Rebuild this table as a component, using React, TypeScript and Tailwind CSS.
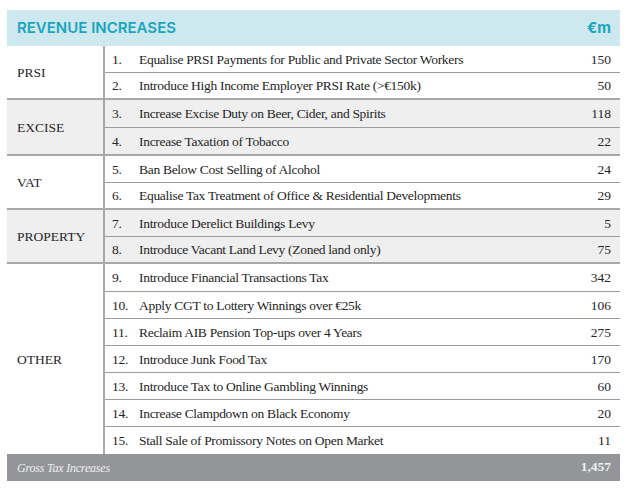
import React from "react";

type Item = { n: string; t: string; v: string; h: number };
type Group = { cat: string; gray: boolean; items: Item[] };

const groups: Group[] = [
  {
    cat: "PRSI",
    gray: false,
    items: [
      { n: "1.", t: "Equalise PRSI Payments for Public and Private Sector Workers", v: "150", h: 27 },
      { n: "2.", t: "Introduce High Income Employer PRSI Rate (>€150k)", v: "50", h: 27 },
    ],
  },
  {
    cat: "EXCISE",
    gray: true,
    items: [
      { n: "3.", t: "Increase Excise Duty on Beer, Cider, and Spirits", v: "118", h: 28 },
      { n: "4.", t: "Increase Taxation of Tobacco", v: "22", h: 28 },
    ],
  },
  {
    cat: "VAT",
    gray: false,
    items: [
      { n: "5.", t: "Ban Below Cost Selling of Alcohol", v: "24", h: 27 },
      { n: "6.", t: "Equalise Tax Treatment of Office & Residential Developments", v: "29", h: 27 },
    ],
  },
  {
    cat: "PROPERTY",
    gray: true,
    items: [
      { n: "7.", t: "Introduce Derelict Buildings Levy", v: "5", h: 27 },
      { n: "8.", t: "Introduce Vacant Land Levy (Zoned land only)", v: "75", h: 27 },
    ],
  },
  {
    cat: "OTHER",
    gray: false,
    items: [
      { n: "9.", t: "Introduce Financial Transactions Tax", v: "342", h: 28 },
      { n: "10.", t: "Apply CGT to Lottery Winnings over €25k", v: "106", h: 27 },
      { n: "11.", t: "Reclaim AIB Pension Top-ups over 4 Years", v: "275", h: 27 },
      { n: "12.", t: "Introduce Junk Food Tax", v: "170", h: 27 },
      { n: "13.", t: "Introduce Tax to Online Gambling Winnings", v: "60", h: 27 },
      { n: "14.", t: "Increase Clampdown on Black Economy", v: "20", h: 27 },
      { n: "15.", t: "Stall Sale of Promissory Notes on Open Market", v: "11", h: 27 },
    ],
  },
];

export default function App() {
  return (
    <div className="w-[630px] h-[491px] bg-white pt-[10px] pl-[7px]">
      <div className="w-[613px]">
        <div
          className="h-[36px] bg-[#cde8ef] flex items-center justify-between pl-[10px] pr-[9px] text-[#1aa5bf] font-semibold text-[15px]"
          style={{ fontFamily: 'Inter, "Open Sans", sans-serif' }}
        >
          <span className="pt-[1px]">REVENUE INCREASES</span>
          <span className="font-bold pt-[1px]">€m</span>
        </div>
        <div
          className="text-[#262626] text-[13.5px] tracking-[-0.3px]"
          style={{ fontFamily: '"Liberation Serif", "DejaVu Serif", serif' }}
        >
          {groups.map((g, gi) => (
            <div
              key={g.cat}
              className={`flex ${g.gray ? "bg-[#efefef]" : "bg-white"} ${gi < groups.length - 1 ? "border-b-2 border-[#a8a8a8]" : ""}`}
            >
              <div className="w-[98px] shrink-0 border-r-2 border-[#a8a8a8] flex items-center pl-[10px] pt-[2px] tracking-[0px]">
                {g.cat}
              </div>
              <div className="flex-1 flex flex-col">
                {g.items.map((it, ii) => {
                  const last = ii === g.items.length - 1;
                  const h = last && gi < groups.length - 1 ? it.h - 2 : it.h;
                  return (
                    <div
                      key={it.n}
                      className={`flex items-center pr-[9px] pt-[2px] ${last ? "" : "border-b border-[#9c9c9c]"}`}
                      style={{ height: h }}
                    >
                      <span className="w-[27px] pl-[7px] box-content shrink-0">{it.n}</span>
                      <span className="flex-1">{it.t}</span>
                      <span className="tracking-[0px]">{it.v}</span>
                    </div>
                  );
                })}
              </div>
            </div>
          ))}
        </div>
        <div
          className="h-[27px] bg-[#939598] flex items-center justify-between pl-[10px] pr-[9px] text-[#f0f0f0]"
          style={{ fontFamily: '"Liberation Serif", "DejaVu Serif", serif' }}
        >
          <span className="italic text-[12px] tracking-[-0.2px]">Gross Tax Increases</span>
          <span className="font-bold text-[13.5px]">1,457</span>
        </div>
      </div>
    </div>
  );
}
